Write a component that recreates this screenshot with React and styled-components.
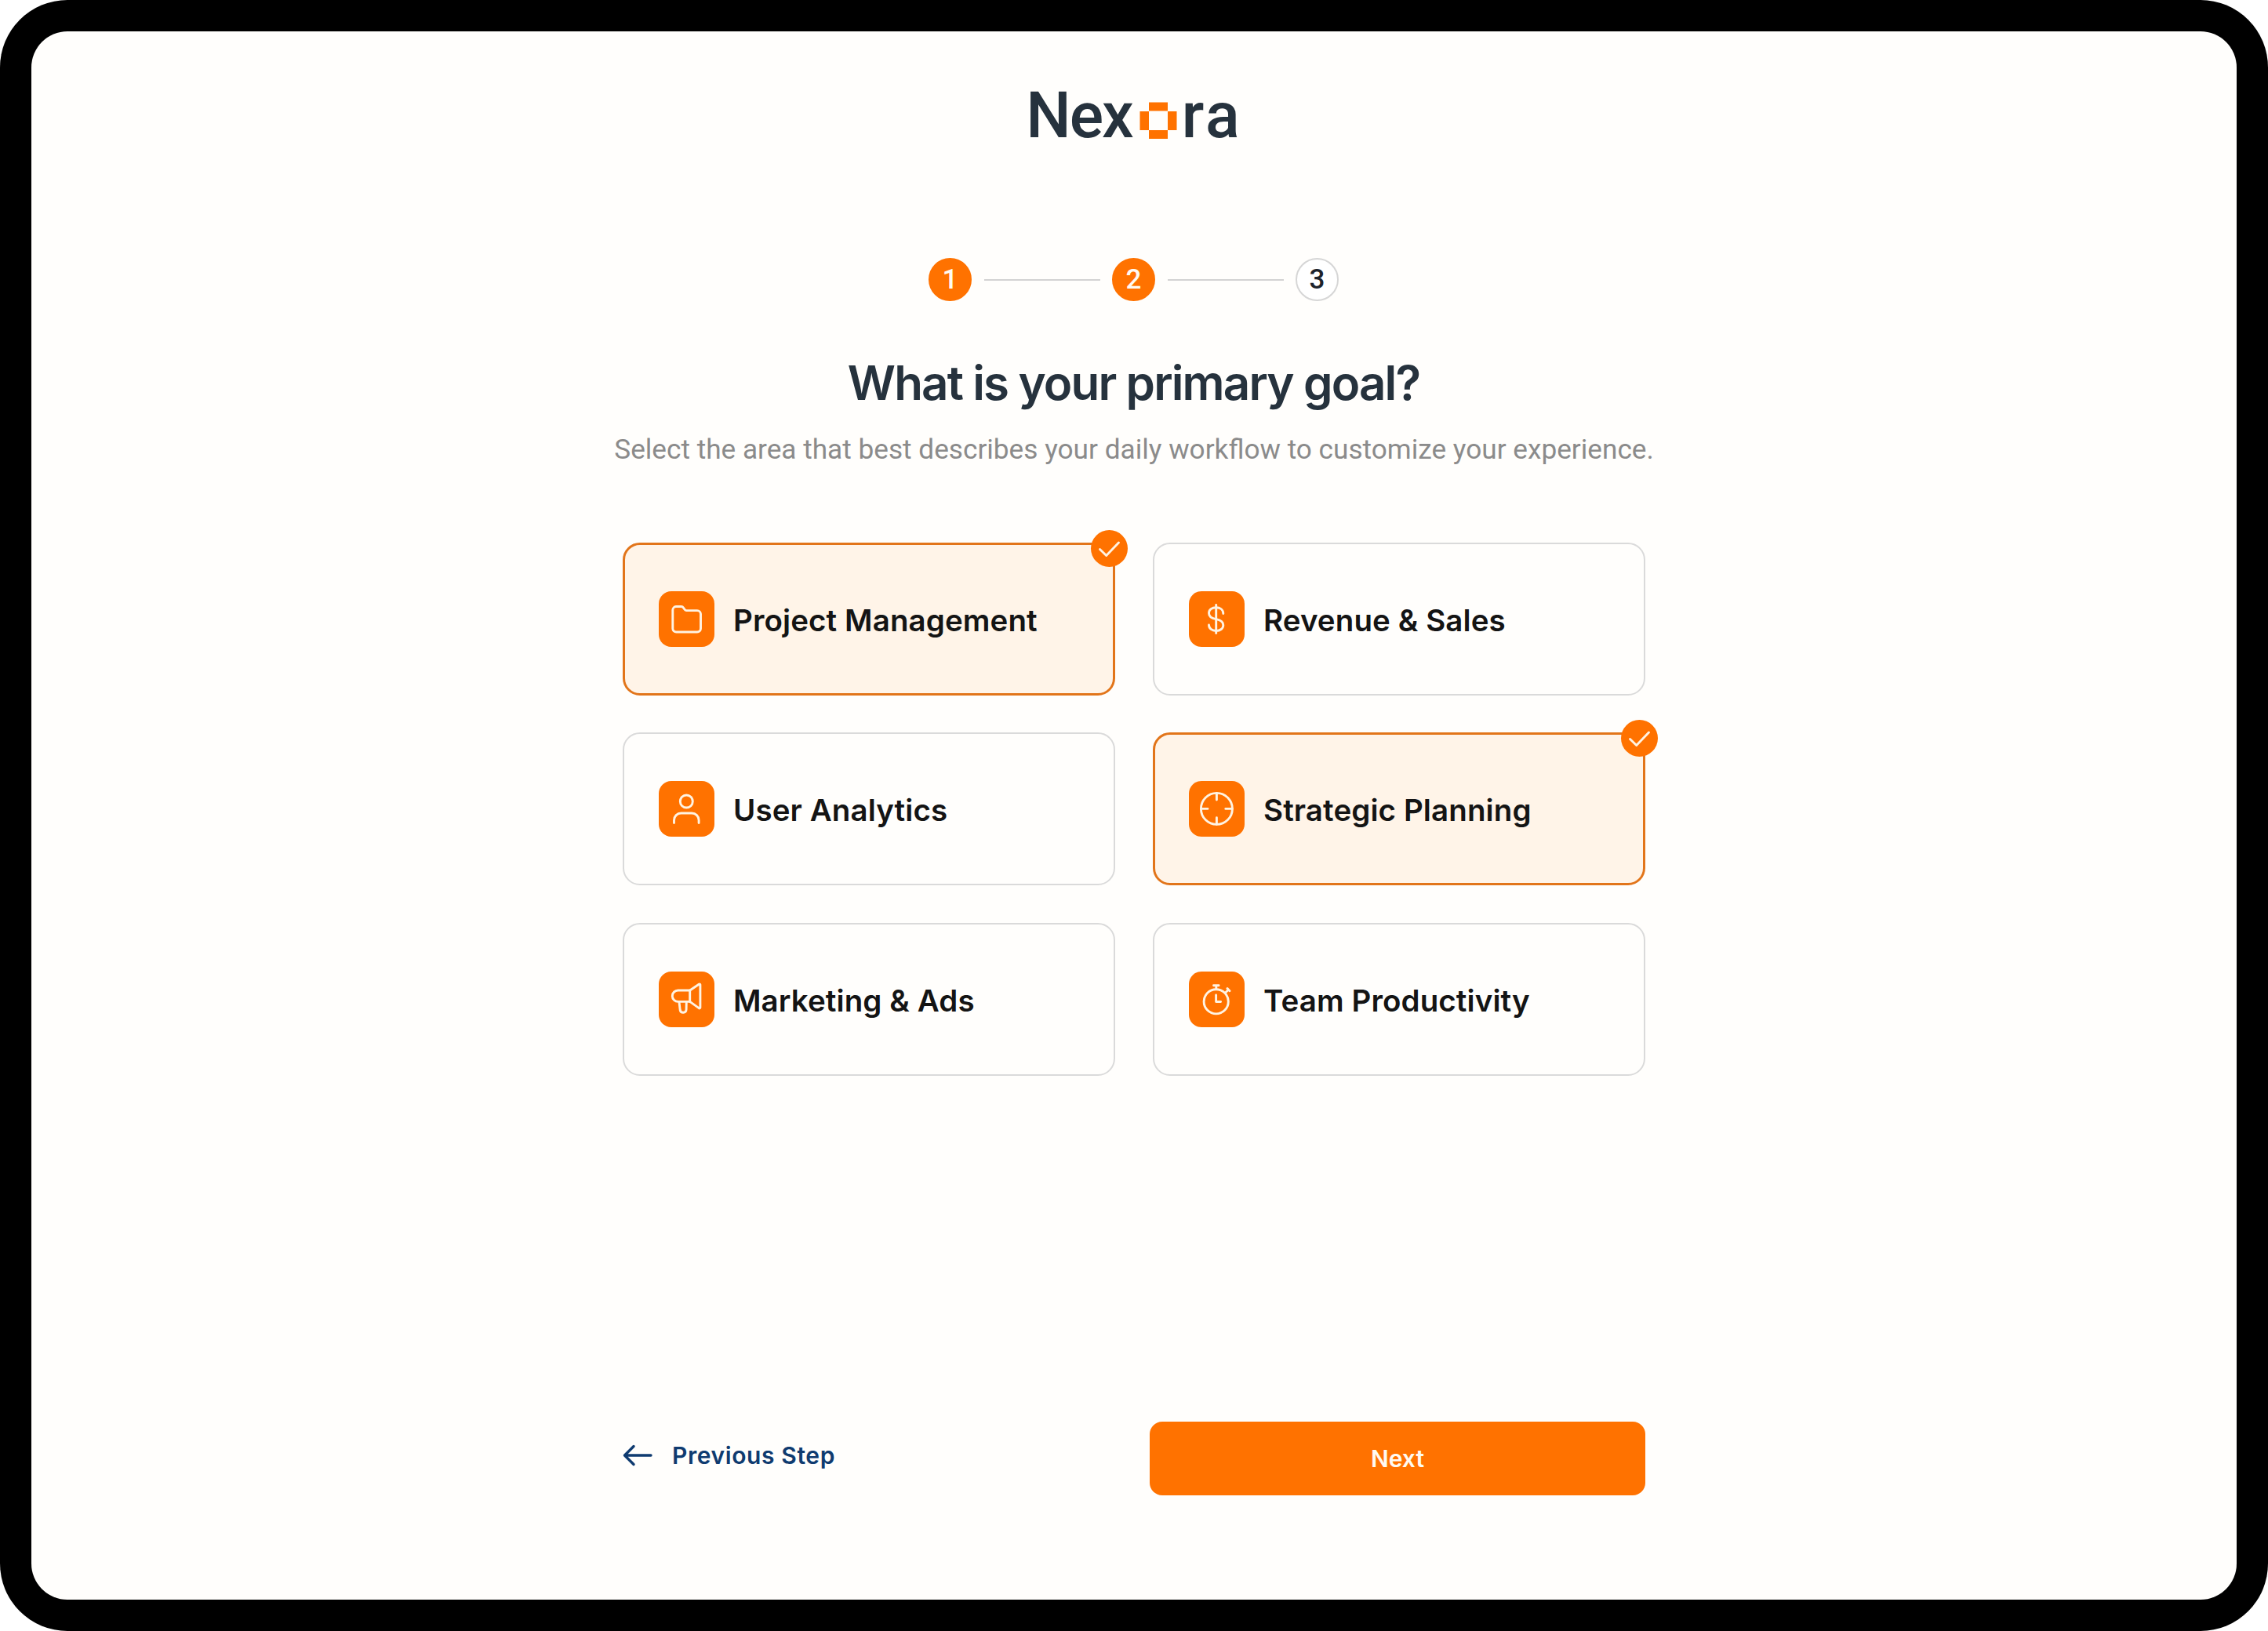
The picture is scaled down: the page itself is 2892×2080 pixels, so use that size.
import React, { useState } from "react";
import styled, { createGlobalStyle } from "styled-components";

const goals = [
  { id: "project", label: "Project Management", icon: FolderIcon },
  { id: "revenue", label: "Revenue & Sales", icon: DollarIcon },
  { id: "user", label: "User Analytics", icon: UserIcon },
  { id: "strategy", label: "Strategic Planning", icon: TargetIcon },
  { id: "marketing", label: "Marketing & Ads", icon: MegaphoneIcon },
  { id: "team", label: "Team Productivity", icon: StopwatchIcon },
];

function FolderIcon() {
  return (
    <Glyph viewBox="0 0 71 71">
      <path d="M22 19.5h6.6a3.5 3.5 0 0 1 2.9 1.6l1.5 2.2a3 3 0 0 0 2.5 1.3H49a4.5 4.5 0 0 1 4.5 4.5v18.4A4.5 4.5 0 0 1 49 52H22.3a4.5 4.5 0 0 1-4.5-4.5V24a4.5 4.5 0 0 1 4.2-4.5z" />
    </Glyph>
  );
}

function DollarIcon() {
  return (
    <Glyph viewBox="0 0 71 71">
      <path d="M34.7 17.5v36" />
      <path d="M43.8 28.5C43.8 23.8 40 20.7 34.7 20.7S25.5 23.6 25.5 28s3.5 6.6 9.2 7.6 9.1 3.4 9.1 7.7-3.8 7.2-9.1 7.2-9.2-3-9.2-7.5" />
    </Glyph>
  );
}

function UserIcon() {
  return (
    <Glyph viewBox="0 0 71 71">
      <circle cx="35.3" cy="26" r="8" />
      <path d="M19.5 53.5V50a9 9 0 0 1 9-9h13.6a9 9 0 0 1 9 9v3.5" />
    </Glyph>
  );
}

function TargetIcon() {
  return (
    <Glyph viewBox="0 0 71 71">
      <circle cx="35.4" cy="35.4" r="20" />
      <path d="M35.4 15.5V24M35.4 46.8v8.5M15.5 35.4H24M46.8 35.4h8.5" />
    </Glyph>
  );
}

function MegaphoneIcon() {
  return (
    <Glyph viewBox="0 0 71 71">
      <path d="M39.7 24H24.5a7.2 7.2 0 0 0 0 14.4h15.2z" />
      <path d="M39.7 24L51.2 16.2a1 1 0 0 1 1.7.8v28.8a1 1 0 0 1-1.7.8L39.7 38.4" />
      <path d="M26 38.6l1.2 10.5a4 4 0 0 0 7.9-.6l.2-9.9" />
    </Glyph>
  );
}

function StopwatchIcon() {
  return (
    <Glyph viewBox="0 0 71 71">
      <circle cx="34.7" cy="38.3" r="15.6" />
      <path d="M31.5 17.7h6.6M34.8 18v4.3M49 21.6l3 3.2M50.3 23.3l-3.5 3.5M34.6 30v8.5h6" />
    </Glyph>
  );
}

function Step({ number, done }) {
  return <StepCircle $done={done}>{number}</StepCircle>;
}

function GoalCard({ goal, selected, onClick }) {
  const Icon = goal.icon;
  return (
    <Card $selected={selected} onClick={onClick}>
      <IconTile>
        <Icon />
      </IconTile>
      <CardLabel>{goal.label}</CardLabel>
      {selected && (
        <Badge>
          <Glyph viewBox="0 0 47 47">
            <path d="M11.5 24.5l8.2 8L35.5 16" />
          </Glyph>
        </Badge>
      )}
    </Card>
  );
}

export default function App() {
  const [selected, setSelected] = useState(["project", "strategy"]);

  const toggle = (id) => {
    setSelected(
      selected.includes(id) ? selected.filter((s) => s !== id) : [...selected, id]
    );
  };

  return (
    <Frame>
      <GlobalStyle />
      <Screen>
        <Logo>
          <LogoText>Nex</LogoText>
          <LogoMark viewBox="0 0 48 48">
            <path d="M12 0.5h24v11H12zM0.5 12H12v24H0.5zM36 12h11.5v24H36zM12 36h24v11H12z" />
          </LogoMark>
          <LogoText $wide>ra</LogoText>
        </Logo>

        <Stepper>
          <Step number={1} done />
          <StepLine />
          <Step number={2} done />
          <StepLine />
          <Step number={3} />
        </Stepper>

        <Title>What is your primary goal?</Title>
        <Subtitle>
          Select the area that best describes your daily workflow to customize your experience.
        </Subtitle>

        <Grid>
          {goals.map((goal) => (
            <GoalCard
              key={goal.id}
              goal={goal}
              selected={selected.includes(goal.id)}
              onClick={() => toggle(goal.id)}
            />
          ))}
        </Grid>

        <Footer>
          <BackButton>
            <Arrow viewBox="0 0 38 28">
              <path d="M36 14H2.5M14 2.5L2.5 14 14 25.5" />
            </Arrow>
            Previous Step
          </BackButton>
          <NextButton>Next</NextButton>
        </Footer>
      </Screen>
    </Frame>
  );
}

const GlobalStyle = createGlobalStyle`
  * {
    box-sizing: border-box;
  }
  body {
    margin: 0;
    background: #fff;
    font-family: Inter, "Liberation Sans", sans-serif;
  }
  h1, p {
    margin: 0;
  }
  button {
    border: none;
    background: none;
    padding: 0;
    font-family: inherit;
    cursor: pointer;
  }
`;

const Frame = styled.div`
  width: 2892px;
  height: 2080px;
  padding: 40px;
  border-radius: 86px;
  background: #000;
`;

const Screen = styled.main`
  display: flex;
  flex-direction: column;
  align-items: center;
  height: 100%;
  padding: 64px 0 133px;
  border-radius: 46px;
  background: #fffefc;
`;

const Logo = styled.div`
  display: flex;
  align-items: flex-start;
  height: 88px;
`;

const LogoText = styled.span`
  color: #26323d;
  font-family: Roboto, sans-serif;
  font-size: 81px;
  font-weight: 500;
  line-height: 87px;
  letter-spacing: ${({ $wide }) => ($wide ? "3px" : "-2px")};
`;

const LogoMark = styled.svg`
  width: 48px;
  height: 48px;
  margin: 26px 6px 0 9px;
  fill: #ff7200;
`;

const Stepper = styled.div`
  display: flex;
  align-items: center;
  gap: 15.5px;
  margin-top: 137px;
  margin-right: 1px;
`;

const StepCircle = styled.div`
  display: flex;
  align-items: center;
  justify-content: center;
  width: 55px;
  height: 55px;
  border: 2px solid ${({ $done }) => ($done ? "#ff7200" : "#d6d6d6")};
  border-radius: 50%;
  background: ${({ $done }) => ($done ? "#ff7200" : "#fff")};
  color: ${({ $done }) => ($done ? "#fffaf2" : "#1d232b")};
  font-family: Roboto, sans-serif;
  font-size: 35px;
  font-weight: 500;
  line-height: 1;
`;

const StepLine = styled.div`
  width: 148px;
  height: 2px;
  background: #d3d3d3;
`;

const Title = styled.h1`
  margin-top: 66px;
  margin-right: 1px;
  color: #26323d;
  font-size: 60px;
  font-weight: 600;
  line-height: 76px;
  letter-spacing: -1.85px;
`;

const Subtitle = styled.p`
  margin-top: 25px;
  color: #8b8b8b;
  font-family: Roboto, sans-serif;
  font-size: 35.2px;
  line-height: 44px;
`;

const Grid = styled.div`
  display: grid;
  grid-template-columns: repeat(2, 628px);
  grid-auto-rows: 195px;
  gap: 47.3px 48px;
  margin-top: 97px;
`;

const Card = styled.div`
  position: relative;
  display: flex;
  align-items: center;
  gap: 24px;
  padding: 0 ${({ $selected }) => ($selected ? "43px" : "44px")};
  border: ${({ $selected }) => ($selected ? "3px solid #e2751a" : "2px solid #dadada")};
  border-radius: 22px;
  background: ${({ $selected }) => ($selected ? "#fff4e8" : "transparent")};
  cursor: pointer;
`;

const IconTile = styled.div`
  width: 71px;
  height: 71px;
  border-radius: 16px;
  background: #ff7200;
`;

const Glyph = styled.svg`
  display: block;
  width: 100%;
  height: 100%;
  fill: none;
  stroke: #fff3e2;
  stroke-width: 2.9;
  stroke-linecap: round;
  stroke-linejoin: round;
`;

const CardLabel = styled.span`
  padding-top: 3px;
  color: #141414;
  font-size: 38.5px;
  font-weight: 600;
  line-height: 48px;
  letter-spacing: 0.1px;
  white-space: nowrap;
`;

const Badge = styled.div`
  position: absolute;
  top: -19px;
  right: -19px;
  width: 47px;
  height: 47px;
  border-radius: 50%;
  background: #ff7200;
`;

const Footer = styled.div`
  display: flex;
  align-items: center;
  justify-content: space-between;
  width: 1304px;
  margin-top: auto;
`;

const BackButton = styled.button`
  display: flex;
  align-items: center;
  gap: 25px;
  margin-top: -8px;
  color: #0f3b70;
  font-size: 30px;
  font-weight: 600;
  letter-spacing: 0.6px;
`;

const Arrow = styled.svg`
  width: 38px;
  height: 28px;
  fill: none;
  stroke: currentColor;
  stroke-width: 3.4;
  stroke-linecap: round;
  stroke-linejoin: round;
`;

const NextButton = styled.button`
  width: 632px;
  height: 94px;
  border-radius: 16px;
  background: #ff7200;
  color: #fffaf2;
  font-size: 30px;
  font-weight: 600;
`;
